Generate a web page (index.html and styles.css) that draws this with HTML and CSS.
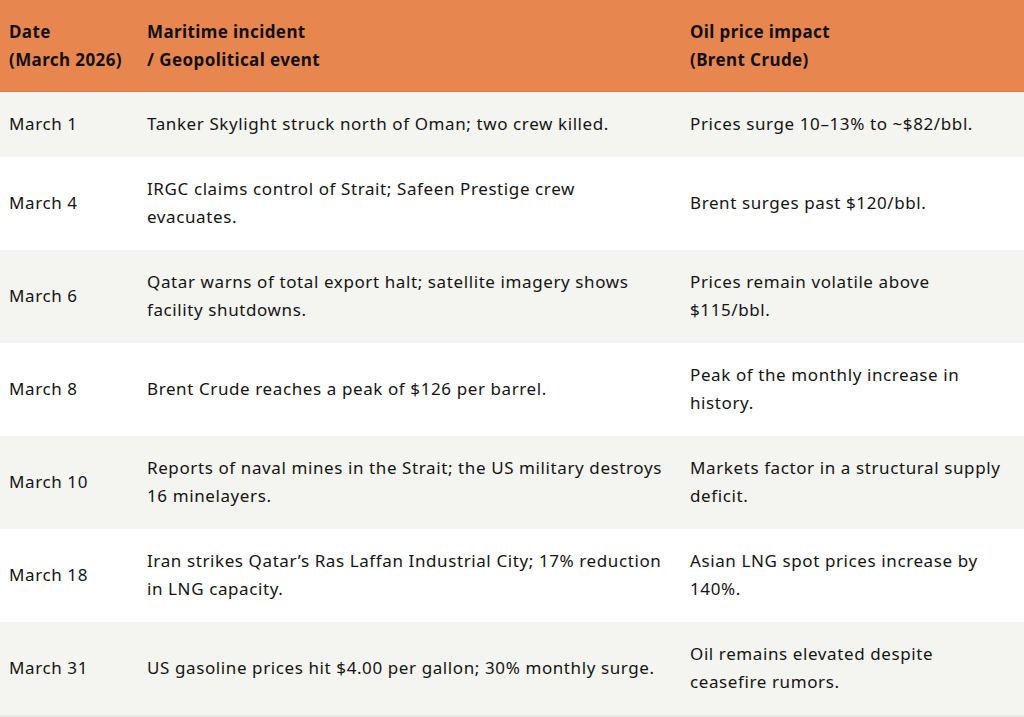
FILE: index.html
```html
<!DOCTYPE html>
<html lang="en">
<head>
<meta charset="utf-8">
<title>Maritime incidents and oil prices, March 2026</title>
<link rel="stylesheet" href="styles.css">
</head>
<body>
<table class="events">
  <colgroup>
    <col class="col-date">
    <col class="col-event">
    <col class="col-impact">
  </colgroup>
  <thead>
    <tr>
      <th>Date<br>(March 2026)</th>
      <th>Maritime incident<br>/ Geopolitical event</th>
      <th>Oil price impact<br>(Brent Crude)</th>
    </tr>
  </thead>
  <tbody>
    <tr>
      <td>March 1</td>
      <td class="event">Tanker Skylight struck north of Oman; two crew killed.</td>
      <td>Prices surge 10–13% to ~$82/bbl.</td>
    </tr>
    <tr>
      <td>March 4</td>
      <td class="event">IRGC claims control of Strait; Safeen Prestige crew evacuates.</td>
      <td>Brent surges past $120/bbl.</td>
    </tr>
    <tr>
      <td>March 6</td>
      <td class="event">Qatar warns of total export halt; satellite imagery shows facility shutdowns.</td>
      <td>Prices remain volatile above $115/bbl.</td>
    </tr>
    <tr>
      <td>March 8</td>
      <td class="event">Brent Crude reaches a peak of $126 per barrel.</td>
      <td>Peak of the monthly increase in history.</td>
    </tr>
    <tr>
      <td>March 10</td>
      <td class="event">Reports of naval mines in the Strait; the US military destroys 16 minelayers.</td>
      <td>Markets factor in a structural supply deficit.</td>
    </tr>
    <tr>
      <td>March 18</td>
      <td class="event">Iran strikes Qatar’s Ras Laffan Industrial City; 17% reduction in LNG capacity.</td>
      <td>Asian LNG spot prices increase by 140%.</td>
    </tr>
    <tr>
      <td>March 31</td>
      <td class="event">US gasoline prices hit $4.00 per gallon; 30% monthly surge.</td>
      <td>Oil remains elevated despite ceasefire rumors.</td>
    </tr>
  </tbody>
</table>
</body>
</html>
```

FILE: styles.css
```css
html, body {
  margin: 0;
  padding: 0;
  background: #ffffff;
}

body {
  font-family: "Noto Sans", "Liberation Sans", sans-serif;
  font-size: 17px;
  line-height: 28px;
  letter-spacing: 0.6px;
  color: #141414;
}

.events {
  width: 1024px;
  border-collapse: collapse;
  table-layout: fixed;
}

.col-date { width: 138px; }
.col-event { width: 543px; }
.col-impact { width: 343px; }

.events th {
  background: #e8864f;
  border-bottom: 1px solid #df7a45;
  text-align: left;
  font-weight: 700;
  letter-spacing: 0.4px;
  padding: 18px 9px 17px;
  vertical-align: middle;
  color: #111;
}

.events td {
  padding: 18px 9px 19px;
  vertical-align: middle;
}

.events td.event {
  padding-right: 15px;
}

.events tbody tr:nth-child(odd) td {
  background: #f4f4f0;
}

.events tbody tr:nth-child(even) td {
  background: #ffffff;
}

.events tbody tr:last-child td {
  border-bottom: 2px solid #e6e6e3;
}
```
